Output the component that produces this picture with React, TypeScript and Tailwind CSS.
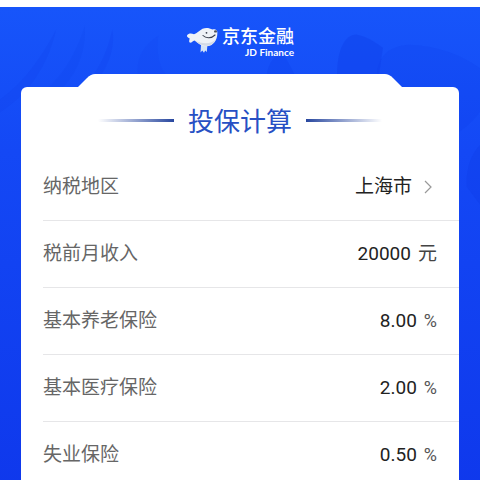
const rates = [
  { id: "pension", label: "基本养老保险", value: "8.00" },
  { id: "medical", label: "基本医疗保险", value: "2.00" },
  { id: "unemployment", label: "失业保险", value: "0.50" },
];

function Mascot() {
  return (
    <svg viewBox="0 0 32 28" className="h-7 w-8 shrink-0" aria-hidden="true">
      <path d="M15 18 L14.500 25.500 L16.300 23.500 L18 25.800 L19.200 23.600 L20.800 25 L21.500 17Z" fill="#d3e3f8" />
      <path
        d="M1 8.500 C2.500 6 5.500 6.200 8 7.300 C11 6.500 13.500 3.500 16.500 1.800 C20 0.200 23.500 1 26.500 2.500 C29.500 1.800 32 3.500 31.300 7 C31.300 12.500 27.500 19.300 20.500 19.300 C15 19.300 11.300 15.500 8.500 13.500 C6.500 14 5.500 16.300 3.800 15.600 C2.600 15 3.400 12.600 3.700 11.400 C2.600 10.800 0.500 10.200 1 8.500Z"
        fill="#eef2f7"
      />
      <path d="M9 13.500 C12 16 15 18.800 20.500 18.800 C25 18.800 28 16 29.800 12.500 C26 17 16 17.500 9 13.500Z" fill="#d3dae6" />
      <path d="M17 8.500 C20 11.800 25.500 11.500 29 8" fill="none" stroke="#39404d" strokeWidth="1.100" strokeLinecap="round" />
      <circle cx="20.500" cy="5.800" r="0.900" fill="#39404d" />
      <ellipse cx="29.500" cy="4.400" rx="1.500" ry="1.200" fill="#4a505b" />
    </svg>
  );
}

function Backdrop() {
  return (
    <svg
      viewBox="0 0 480 472"
      preserveAspectRatio="xMidYMin slice"
      className="absolute inset-0 h-full w-full"
      aria-hidden="true"
    >
      <g fill="#0c36e4">
        <path d="M0 94 C28 76 46 48 60 22 C52 58 32 88 0 106Z" opacity=".14" />
        <path d="M52 79 C72 60 82 38 88 18 C90 42 80 66 66 79Z" opacity=".1" />
        <path d="M96 67 C108 50 112 34 115 22 C118 38 112 54 104 67Z" opacity=".15" />
        <path d="M140 67 C138 50 145 38 160 28 C158 45 160 56 168 67Z" opacity=".08" />
        <path d="M266 67 C268 52 278 42 284 48 L294 67Z" opacity=".2" />
        <path d="M335 67 C335 43 342 27 354 27 C364 29 372 34 380 40 L376 67Z" opacity=".28" />
        <path d="M374 67 C375 48 386 38 406 37 C437 38 462 49 480 64 V96 C470 110 462 120 440 130 V79 H385Z" opacity=".16" />
        <path d="M480 130 C466 142 461 158 462 176 L480 200Z" opacity=".25" />
      </g>
    </svg>
  );
}

export default function App() {
  return (
    <div className="flex h-screen flex-col overflow-hidden bg-white pt-[7px] font-['Roboto','Noto_Sans_CJK_SC',sans-serif]">
      <div className="relative isolate flex flex-1 flex-col bg-linear-to-b from-[#1755fa] via-[#1448f5] via-30% to-[#0f38ec] px-[21px]">
        <div className="absolute inset-0 -z-10 overflow-hidden">
          <Backdrop />
        </div>

        <header className="flex h-[67px] items-center justify-center gap-1 text-white">
          <Mascot />
          <div className="flex flex-col items-end pt-[2px]">
            <span className="text-[18px] font-medium leading-[20px]">京东金融</span>
            <span className="font-['Lato',sans-serif] text-[10px] font-bold leading-[10px]">JD Finance</span>
          </div>
        </header>

        <main className="flex flex-1 flex-col">
          <div className="mx-[57px] flex h-[13px]">
            <div className="flex-1 origin-bottom -skew-x-45 rounded-tl-[4px] bg-white" />
            <div className="flex-1 origin-bottom skew-x-45 rounded-tr-[4px] bg-white" />
          </div>

          <section className="flex-1 rounded-t-md bg-white">
            <div className="flex h-[67px] items-center justify-center gap-[14px]">
              <span className="h-[3px] w-[76px] bg-linear-to-r from-transparent to-[#28479f]" />
              <h1 className="pt-[2px] text-[26px] leading-[30px] text-[#2750c4]">投保计算</h1>
              <span className="h-[3px] w-[76px] bg-linear-to-l from-transparent to-[#28479f]" />
            </div>

            <form className="pl-[22px] text-[19px] leading-[28px] text-[#222222]">
              <div className="flex h-[67px] items-center justify-between border-b border-[#e6e6e8] pr-[26px]">
                <span id="region-label" className="text-[#666666]">纳税地区</span>
                <button type="button" aria-describedby="region-label" className="flex items-center gap-[11px]">
                  上海市
                  <svg viewBox="0 0 10 14" className="h-[14px] w-[10px]" aria-hidden="true">
                    <path d="M2 1 L8 7 L2 13" fill="none" stroke="#999999" strokeWidth="1.200" />
                  </svg>
                </button>
              </div>

              <div className="flex h-[67px] items-center border-b border-[#e6e6e8] pr-[22px]">
                <label htmlFor="income" className="flex-1 text-[#666666]">税前月收入</label>
                <input id="income" defaultValue="20000" inputMode="numeric" className="w-24 text-right outline-none" />
                <span className="ml-[7px] text-[#444444]">元</span>
              </div>

              {rates.map((rate) => (
                <div key={rate.id} className="flex h-[67px] items-center border-b border-[#e6e6e8] pr-[22px]">
                  <label htmlFor={rate.id} className="flex-1 text-[#666666]">{rate.label}</label>
                  <input id={rate.id} defaultValue={rate.value} inputMode="decimal" className="w-24 text-right outline-none" />
                  <span className="ml-[7px] text-[18px] text-[#555555]">%</span>
                </div>
              ))}
            </form>
          </section>
        </main>
      </div>
    </div>
  );
}
